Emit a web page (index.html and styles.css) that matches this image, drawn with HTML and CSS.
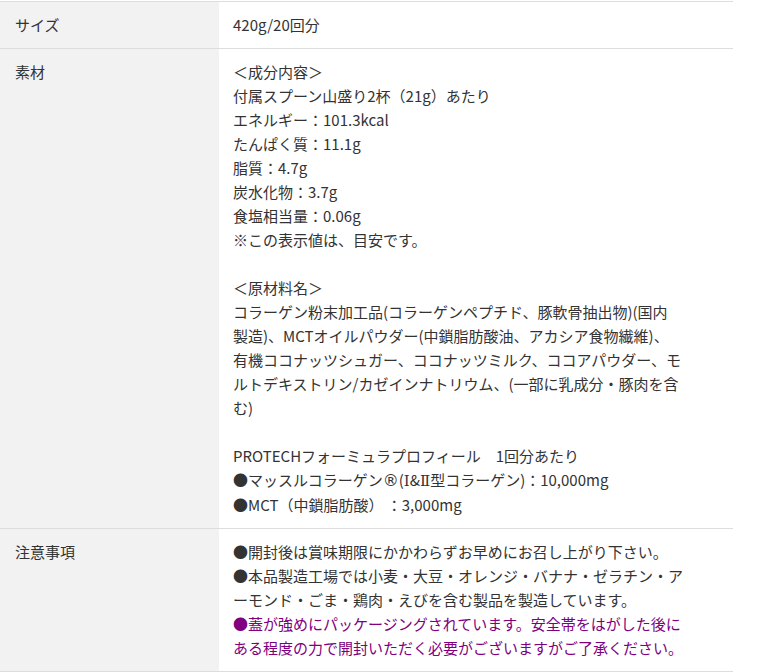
FILE: index.html
```html
<!DOCTYPE html>
<html lang="ja">
<head>
<meta charset="utf-8">
<link rel="stylesheet" href="styles.css">
</head>
<body>
<table class="spec">
  <tr>
    <th>サイズ</th>
    <td>420g/20回分</td>
  </tr>
  <tr>
    <th>素材</th>
    <td>＜成分内容＞<br>付属スプーン山盛り2杯（21g）あたり<br>エネルギー：101.3kcal<br>たんぱく質：11.1g<br>脂質：4.7g<br>炭水化物：3.7g<br>食塩相当量：0.06g<br>※この表示値は、目安です。<br><br>＜原材料名＞<br>コラーゲン粉末加工品(コラーゲンペプチド、豚軟骨抽出物)(国内<br>製造)、MCTオイルパウダー(中鎖脂肪酸油、アカシア食物繊維)、<br>有機ココナッツシュガー、ココナッツミルク、ココアパウダー、モ<br>ルトデキストリン/カゼインナトリウム、(一部に乳成分・豚肉を含<br>む)<br><br>PROTECHフォーミュラプロフィール　1回分あたり<br>●マッスルコラーゲン<span class="reg">®</span>(<span class="roman">Ⅰ</span>&amp;<span class="roman">Ⅱ</span>型コラーゲン)：10,000mg<br>●MCT（中鎖脂肪酸） ：3,000mg</td>
  </tr>
  <tr>
    <th>注意事項</th>
    <td>●開封後は賞味期限にかかわらずお早めにお召し上がり下さい。<br>●本品製造工場では小麦・大豆・オレンジ・バナナ・ゼラチン・ア<br>ーモンド・ごま・鶏肉・えびを含む製品を製造しています。<br><span class="note">●蓋が強めにパッケージングされています。安全帯をはがした後に<br>ある程度の力で開封いただく必要がございますがご了承ください。</span></td>
  </tr>
</table>
</body>
</html>
```

FILE: styles.css
```css
html, body {
  margin: 0;
  padding: 0;
  background: #fff;
}
body {
  padding-top: 1px;
  font-family: "Noto Sans CJK JP", "Noto Sans", sans-serif;
  font-size: 15px;
  line-height: 24px;
  color: #333;
}
.spec {
  border-collapse: collapse;
  width: 733px;
  border-top: 1px solid #ddd;
}
.spec tr {
  border-bottom: 1px solid #ddd;
}
.spec th {
  width: 204px;
  background: #f2f2f2;
  text-align: left;
  vertical-align: top;
  font-weight: normal;
  padding: 11px 0 11px 15px;
}
.spec td {
  vertical-align: top;
  padding: 11px 20px 11px 14px;
  white-space: nowrap;
}
.reg {
  font-family: "DejaVu Sans", sans-serif;
  font-size: 16px;
}
.roman {
  font-family: "Liberation Serif", "DejaVu Serif", serif;
}
.note {
  color: #800080;
}
```
